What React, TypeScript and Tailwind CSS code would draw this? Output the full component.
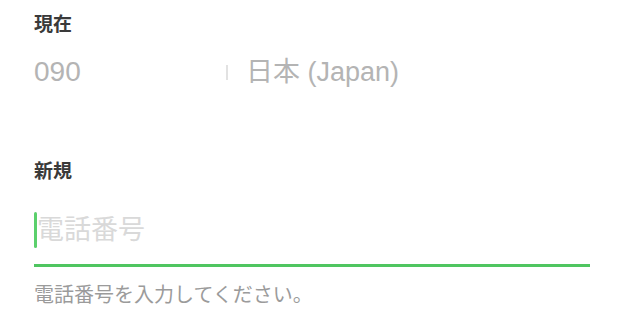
export default function App() {
  return (
    <div
      className="min-h-screen bg-white px-[34px] pt-[13px]"
      style={{ fontFamily: '"Liberation Sans", "Noto Sans CJK JP", sans-serif' }}
    >
      {/* current number */}
      <h2 className="text-[19px] font-bold leading-[24px] text-[#3a3a3a]">現在</h2>
      <div className="mt-[17px] flex h-[36px] items-center leading-[36px] text-[#b4b4b4]">
        <span className="w-[192px] text-[28px]">090</span>
        <span className="h-[15px] w-[2px] bg-[#e2e2e2]" />
        <span className="ml-[18px] text-[27px]">日本 (Japan)</span>
      </div>

      {/* new number */}
      <h2 className="mt-[70px] text-[19px] font-bold leading-[24px] text-[#3a3a3a]">新規</h2>
      <div className="mt-[28px] border-b-[3px] border-[#4fc560] pb-[16px]">
        <div className="flex h-[36px] items-center">
          <span className="h-[36px] w-[3px] rounded-full bg-[#5bd06c]" />
          <span className="text-[27px] leading-[36px] text-[#d9d9d9]">電話番号</span>
        </div>
      </div>
      <p className="mt-[16px] text-[20px] leading-[24px] text-[#9b9b9b]">電話番号を入力してください。</p>
    </div>
  );
}
